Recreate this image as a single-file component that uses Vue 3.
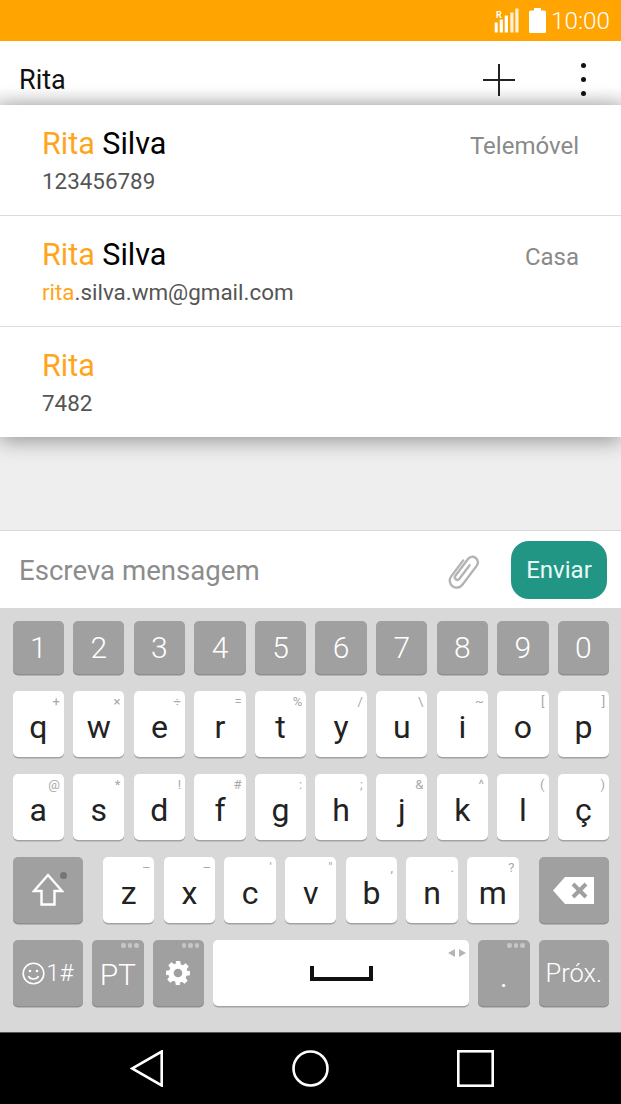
<script setup>
const numbers = ['1', '2', '3', '4', '5', '6', '7', '8', '9', '0']

const topRow = [
  ['q', '+'], ['w', '×'], ['e', '÷'], ['r', '='], ['t', '%'],
  ['y', '/'], ['u', '\\'], ['i', '~'], ['o', '['], ['p', ']']
]
const midRow = [
  ['a', '@'], ['s', '*'], ['d', '!'], ['f', '#'], ['g', ':'],
  ['h', ';'], ['j', '&'], ['k', '^'], ['l', '('], ['ç', ')']
]
const lowRow = [
  ['z', '–'], ['x', '–'], ['c', "'"], ['v', '"'], ['b', ','], ['n', '.'], ['m', '?']
]

const contacts = [
  { first: 'Rita', last: ' Silva', sub: '123456789', subMark: '', type: 'Telemóvel' },
  { first: 'Rita', last: ' Silva', sub: '.silva.wm@gmail.com', subMark: 'rita', type: 'Casa' },
  { first: 'Rita', last: '', sub: '7482', subMark: '', type: '' }
]
</script>

<template>
  <div class="phone">
    <div class="status-bar">
      <svg class="signal" width="26" height="26" viewBox="0 0 26 26">
        <text x="3" y="9.500" class="roaming">R</text>
        <rect x="1.700" y="14.500" width="3" height="10" fill="#fff" />
        <rect x="6.700" y="11.500" width="3.200" height="13" fill="#fff" />
        <rect x="11.700" y="7.500" width="3.200" height="17" fill="#fff" />
        <rect x="17.300" y="4.500" width="3.200" height="20" fill="#fff" opacity=".85" />
        <rect x="22.300" y="0.500" width="3.200" height="24" fill="#fff" opacity=".85" />
      </svg>
      <svg class="battery" width="17" height="25" viewBox="0 0 17 25">
        <path d="M5 0h7v2.500h3.500a1.500 1.500 0 0 1 1.500 1.500v19.500a1.500 1.500 0 0 1-1.500 1.500h-14a1.500 1.500 0 0 1-1.500-1.500v-19.500a1.500 1.500 0 0 1 1.500-1.500h3.500z" fill="#fff" />
      </svg>
      <span class="clock">10:00</span>
    </div>

    <header class="app-bar">
      <span class="to-field">Rita</span>
      <svg class="plus" width="32" height="32" viewBox="0 0 32 32">
        <path d="M0 16h32M16 0v32" stroke="#222" stroke-width="2" fill="none" />
      </svg>
      <div class="more">
        <i></i><i></i><i></i>
      </div>
    </header>

    <main class="thread">
      <ul class="suggestions">
        <li v-for="(c, i) in contacts" :key="i" class="contact">
          <div class="contact-text">
            <div class="contact-name"><span class="mark">{{ c.first }}</span>{{ c.last }}</div>
            <div class="contact-sub"><span class="mark">{{ c.subMark }}</span>{{ c.sub }}</div>
          </div>
          <span class="contact-type">{{ c.type }}</span>
        </li>
      </ul>
    </main>

    <div class="composer">
      <span class="placeholder">Escreva mensagem</span>
      <svg class="clip" width="36" height="38" viewBox="0 0 36 38">
        <path transform="translate(18 19) rotate(37) translate(-10 -20)" d="M3 12V32a7 7 0 0 0 14 0V8a5.500 5.500 0 0 0-11 0V29a2.500 2.500 0 0 0 5 0V12" fill="none" stroke="#b4b4b4" stroke-width="2.400" stroke-linecap="round" />
      </svg>
      <button class="send">Enviar</button>
    </div>

    <div class="keyboard">
      <div class="key-row num-row">
        <div v-for="n in numbers" :key="n" class="key dark num">{{ n }}</div>
      </div>
      <div class="key-row">
        <div v-for="k in topRow" :key="k[0]" class="key letter">
          <span class="hint">{{ k[1] }}</span>{{ k[0] }}
        </div>
      </div>
      <div class="key-row">
        <div v-for="k in midRow" :key="k[0]" class="key letter">
          <span class="hint">{{ k[1] }}</span>{{ k[0] }}
        </div>
      </div>
      <div class="key-row low-row">
        <div class="key dark wide">
          <svg width="32" height="34" viewBox="0 0 32 34">
            <path d="M16 2 L30 18 H22.500 V31.500 H9.500 V18 H2 Z" fill="none" stroke="#fff" stroke-width="2.400" stroke-linejoin="miter" />
          </svg>
          <span class="caps-dot"></span>
        </div>
        <div class="low-letters">
          <div v-for="k in lowRow" :key="k[0]" class="key letter">
            <span class="hint">{{ k[1] }}</span>{{ k[0] }}
          </div>
        </div>
        <div class="key dark wide">
          <svg width="41" height="27" viewBox="0 0 41 27">
            <path d="M12 0 H41 V27 H12 L0 13.500 Z" fill="#fff" />
            <path d="M20 7 L33 20 M33 7 L20 20" stroke="#a0a0a0" stroke-width="4" fill="none" />
          </svg>
        </div>
      </div>
      <div class="key-row bottom-row">
        <div class="key dark wide symbols">
          <svg width="23" height="23" viewBox="0 0 23 23">
            <circle cx="11.500" cy="11.500" r="10.300" fill="none" stroke="#fff" stroke-width="1.600" />
            <circle cx="8" cy="9" r="1.300" fill="#fff" />
            <circle cx="15" cy="9" r="1.300" fill="#fff" />
            <path d="M6.500 14 C8 18 15 18 16.500 14" fill="none" stroke="#fff" stroke-width="1.600" />
          </svg>
          <span>1#</span>
        </div>
        <div class="key dark lang">
          <span class="dots"><i></i><i></i><i></i></span>PT
        </div>
        <div class="key dark gear">
          <span class="dots"><i></i><i></i><i></i></span>
          <svg width="26" height="26" viewBox="0 0 24 24">
            <path fill="#fff" fill-rule="evenodd" d="M10 1h4l.6 3.100 1.900.8 2.600-1.800 2.800 2.800-1.800 2.600.8 1.900L23 10v4l-3.100.6-.8 1.900 1.800 2.600-2.800 2.800-2.600-1.800-1.900.8L14 23h-4l-.6-3.100-1.900-.8-2.600 1.800-2.800-2.800 1.800-2.600-.8-1.900L1 14v-4l3.100-.6.8-1.900-1.800-2.600 2.800-2.800 2.600 1.800 1.900-.8zM12 8a4 4 0 1 0 0 8 4 4 0 0 0 0-8z" />
          </svg>
        </div>
        <div class="key space">
          <svg class="space-arrows" width="18" height="8" viewBox="0 0 18 8">
            <path d="M7 0v8L0 4zM11 0v8l7-4z" fill="#b5b5b5" />
          </svg>
          <svg width="63" height="15" viewBox="0 0 63 15">
            <path d="M2 0v13h59V0" fill="none" stroke="#111" stroke-width="4" />
          </svg>
        </div>
        <div class="key dark period">
          <span class="dots"><i></i><i></i><i></i></span>.
        </div>
        <div class="key dark wide next">Próx.</div>
      </div>
    </div>

    <nav class="nav-bar">
      <svg width="33" height="37" viewBox="0 0 33 37">
        <path d="M31.700 1.500 V35.500 L2 18.500 Z" fill="none" stroke="#fff" stroke-width="2.600" />
      </svg>
      <svg width="37" height="37" viewBox="0 0 37 37">
        <circle cx="18.500" cy="18.500" r="17" fill="none" stroke="#fff" stroke-width="2.600" />
      </svg>
      <svg width="37" height="37" viewBox="0 0 37 37">
        <rect x="1.300" y="1.300" width="34.400" height="34.400" fill="none" stroke="#fff" stroke-width="2.600" />
      </svg>
    </nav>
  </div>
</template>

<style>
html, body {
  margin: 0;
  background: #000;
}
</style>

<style scoped>
.phone {
  width: 621px;
  height: 1104px;
  display: flex;
  flex-direction: column;
  font-family: Roboto, "Liberation Sans", sans-serif;
  overflow: hidden;
  background: #eee;
}

.status-bar {
  height: 41px;
  flex-shrink: 0;
  background: #ffa400;
  display: flex;
  align-items: center;
  justify-content: flex-end;
  padding-right: 13px;
  box-sizing: border-box;
}
.signal {
  margin-right: 10px;
}
.roaming {
  font-size: 9px;
  font-weight: 700;
  fill: #fff;
}
.battery {
  margin-right: 5px;
}
.clock {
  color: #fff;
  font-size: 24.300px;
  font-weight: 300;
  width: 57px;
  white-space: nowrap;
}

.app-bar {
  height: 64px;
  flex-shrink: 0;
  background: linear-gradient(#fff 72%, #ebebeb);
  display: flex;
  align-items: center;
  padding: 13px 35px 0 19px;
  box-sizing: border-box;
}
.to-field {
  flex: 1;
  font-size: 27px;
  color: #111;
}
.plus {
  margin-right: 66px;
}
.more {
  display: flex;
  flex-direction: column;
  gap: 8.500px;
}
.more i {
  display: block;
  width: 5.500px;
  height: 5.500px;
  border-radius: 50%;
  background: #111;
}

.thread {
  flex: 1;
  min-height: 0;
  background: #eee;
  border-bottom: 1px solid #d9d9d9;
}
.suggestions {
  list-style: none;
  margin: 0;
  padding: 0;
  background: #fff;
  box-shadow: 0 3px 20px rgba(0, 0, 0, .4);
}
.contact {
  height: 110px;
  box-sizing: content-box;
  padding: 0 42px;
  display: flex;
  justify-content: space-between;
  border-bottom: 1px solid #dcdcdc;
}
.contact:last-child {
  border-bottom: 0;
}
.contact-text {
  padding-top: 21px;
}
.contact-name {
  font-size: 30.500px;
  line-height: 36px;
  color: #000;
}
.contact-sub {
  font-size: 22.400px;
  line-height: 26px;
  margin-top: 6px;
  color: #555;
}
.mark {
  color: #ffa51c;
}
.contact-type {
  padding-top: 27px;
  font-size: 24px;
  line-height: 28px;
  color: #8a8a8a;
}

.composer {
  height: 77px;
  flex-shrink: 0;
  background: #fff;
  display: flex;
  align-items: center;
  padding: 2px 14px 0 19px;
  box-sizing: border-box;
}
.placeholder {
  flex: 1;
  font-size: 27.600px;
  color: #8c8c8c;
}
.clip {
  margin-right: 29px;
}
.send {
  width: 96px;
  height: 58px;
  margin-top: -2px;
  border: 0;
  border-radius: 18px;
  background: #229684;
  color: #eafaf6;
  font-family: inherit;
  font-size: 24px;
  padding: 0;
}

.keyboard {
  height: 424px;
  flex-shrink: 0;
  background: #d8d8d8;
  padding: 13px 12px 0 12.600px;
  box-sizing: border-box;
  display: flex;
  flex-direction: column;
  gap: 17px;
}
.key-row {
  display: flex;
  gap: 9.300px;
  height: 66px;
  flex-shrink: 0;
}
.num-row {
  height: 53px;
}
.key {
  position: relative;
  flex: 1;
  min-width: 0;
  border-radius: 5px;
  display: flex;
  align-items: center;
  justify-content: center;
  box-shadow: 0 1.500px 0 #a3a3a3;
}
.key.dark {
  background: #a0a0a0;
  color: #fff;
  box-shadow: 0 1.500px 0 #8e8e8e;
}
.num {
  font-size: 30px;
  font-weight: 300;
}
.letter {
  background: #fff;
  color: #222;
  font-size: 32px;
  padding-top: 5px;
  box-sizing: border-box;
}
.hint {
  position: absolute;
  top: 3px;
  right: 4px;
  font-size: 13px;
  line-height: 16px;
  color: #a8a8a8;
}
.low-row {
  gap: 20px;
}
.low-letters {
  flex: 1;
  display: flex;
  gap: 9.300px;
}
.wide {
  flex: 0 0 70.500px;
}
.caps-dot {
  position: absolute;
  top: 15px;
  right: 16px;
  width: 7px;
  height: 7px;
  border-radius: 50%;
  background: #757575;
}
.symbols {
  font-size: 24px;
  gap: 1px;
  font-weight: 300;
}
.bottom-row {
  gap: 9px;
}
.lang,
.gear,
.period {
  flex: 0 0 51.500px;
}
.lang {
  font-size: 30px;
  font-weight: 300;
  padding-top: 2px;
  box-sizing: border-box;
}
.period {
  font-size: 28px;
  padding-top: 8px;
  box-sizing: border-box;
}
.dots {
  position: absolute;
  top: 3px;
  right: 5px;
  display: flex;
  gap: 2px;
}
.dots i {
  display: block;
  width: 4.500px;
  height: 4.500px;
  border-radius: 50%;
  background: #c6c6c6;
}
.space {
  background: #fff;
}
.space-arrows {
  position: absolute;
  top: 9px;
  right: 3px;
}
.next {
  font-size: 25.500px;
  font-weight: 300;
}

.nav-bar {
  height: 72px;
  flex-shrink: 0;
  background: #000;
  border-top: 1px solid #555;
  display: flex;
  align-items: center;
  gap: 128.500px;
  padding-left: 130px;
  box-sizing: border-box;
}
</style>
